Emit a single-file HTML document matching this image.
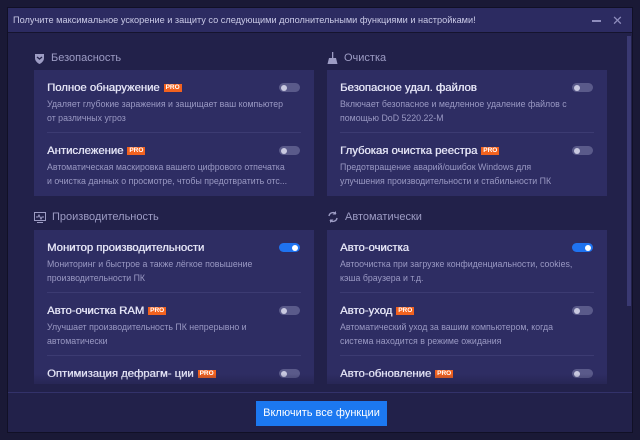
<!DOCTYPE html><html><head><meta charset="utf-8"><style>
*{margin:0;padding:0;box-sizing:border-box}
body{width:640px;height:440px;background:#1a1936;font-family:"Liberation Sans",sans-serif;position:relative;overflow:hidden}
.win{position:absolute;left:7px;top:7px;width:626px;height:426px;background:#22214a;border:1px solid #111026}
.tb{position:absolute;left:0;top:0;width:624px;height:25px;background:#2c2b61;border-bottom:1px solid #15142e;color:#c9c9e6;font-size:9.2px;line-height:25px;padding-left:5px}
.h{position:absolute;color:#9d9cc4;font-size:11px;display:flex;align-items:center;gap:6px}
.card{position:absolute;background:#2e2d63;width:280px;padding:0 13px}
.row{position:relative;border-bottom:1px solid #3c3b72}
.row:last-child{border-bottom:none}
.t{color:#e2e2f4;font-size:11.3px;height:16px;line-height:16px;text-shadow:0.4px 0 0 #e2e2f4}
.d{color:#9a99c3;font-size:8.8px;line-height:14px;margin-top:1px;white-space:nowrap}
.pro{display:inline-block;background:#f2621f;color:#fff;font-size:6.5px;line-height:8px;padding:0 2px;margin-left:4px;vertical-align:2px;font-weight:bold;text-shadow:none}
.tg{position:absolute;right:1px;top:13px;width:21px;height:9px;border-radius:5px;background:#5a5a8a}
.tg:after{content:"";position:absolute;left:2px;top:1.5px;width:6px;height:6px;border-radius:50%;background:#c9c9e0}
.tg.on{background:#1f73f0}.tg.on:after{left:13px;background:#fff}
</style></head><body>
<div class="win">
<div class="tb">Получите максимальное ускорение и защиту со следующими дополнительными функциями и настройками!
<span style="position:absolute;left:584px;top:12px;width:9px;height:1.5px;background:#8e8dbd"></span>
<span style="position:absolute;left:604px;top:0;color:#8e8dbd;font-size:13px">✕</span></div>
<div style="position:absolute;left:619px;top:28px;width:4px;height:270px;background:#3a3972"></div>
<div class="h" style="left:26px;top:44px"><svg width="11" height="11" viewBox="0 0 11 11"><path d="M1 1h9v4c0 3-2.5 5-4.5 6C3.5 10 1 8 1 5z" fill="#9d9cc4"/><path d="M3 4l2.5 2L8 4" stroke="#22214a" stroke-width="1.3" fill="none"/></svg>Безопасность</div>
<div class="h" style="left:319px;top:44px"><svg width="11" height="12" viewBox="0 0 11 12"><rect x="5" y="0" width="1.3" height="6" fill="#9d9cc4"/><path d="M2 6h7l1.5 6h-10z" fill="#9d9cc4"/></svg>Очистка</div>
<div class="h" style="left:26px;top:203px"><svg width="12" height="11" viewBox="0 0 12 11"><rect x="0.5" y="0.5" width="11" height="8" fill="none" stroke="#9d9cc4"/><path d="M2 5h2l1-2 2 4 1-2h2" stroke="#9d9cc4" fill="none"/><rect x="3" y="10" width="6" height="1" fill="#9d9cc4"/></svg>Производительность</div>
<div class="h" style="left:319px;top:203px"><svg width="12" height="12" viewBox="0 0 12 12"><path d="M2 5a4 4 0 0 1 7-2M10 7a4 4 0 0 1-7 2" stroke="#9d9cc4" stroke-width="1.4" fill="none"/><path d="M9 0v3.5H5.5zM3 12V8.5h3.5z" fill="#9d9cc4"/></svg>Автоматически</div>

<div class="card" style="left:26px;top:62px;height:126px">
<div class="row" style="padding-top:10px;height:63px"><div class="t">Полное обнаружение<span class="pro">PRO</span></div><div class="tg"></div><div class="d">Удаляет глубокие заражения и защищает ваш компьютер<br>от различных угроз</div></div>
<div class="row" style="padding-top:10px;height:62px"><div class="t">Антислежение<span class="pro">PRO</span></div><div class="tg"></div><div class="d">Автоматическая маскировка вашего цифрового отпечатка<br>и очистка данных о просмотре, чтобы предотвратить отс...</div></div>
</div>
<div class="card" style="left:319px;top:62px;height:126px">
<div class="row" style="padding-top:10px;height:63px"><div class="t">Безопасное удал. файлов</div><div class="tg"></div><div class="d">Включает безопасное и медленное удаление файлов с<br>помощью DoD 5220.22-M</div></div>
<div class="row" style="padding-top:10px;height:62px"><div class="t">Глубокая очистка реестра<span class="pro">PRO</span></div><div class="tg"></div><div class="d">Предотвращение аварий/ошибок Windows для<br>улучшения производительности и стабильности ПК</div></div>
</div>
<div class="card" style="left:26px;top:222px;height:154px;overflow:hidden">
<div class="row" style="padding-top:10px;height:63px"><div class="t">Монитор производительности</div><div class="tg on"></div><div class="d">Мониторинг и быстрое а также лёгкое повышение<br>производительности ПК</div></div>
<div class="row" style="padding-top:10px;height:63px"><div class="t">Авто-очистка RAM<span class="pro">PRO</span></div><div class="tg"></div><div class="d">Улучшает производительность ПК непрерывно и<br>автоматически</div></div>
<div class="row" style="padding-top:10px;height:63px"><div class="t">Оптимизация дефрагм- ции<span class="pro">PRO</span></div><div class="tg"></div></div>
</div>
<div class="card" style="left:319px;top:222px;height:154px;overflow:hidden">
<div class="row" style="padding-top:10px;height:63px"><div class="t">Авто-очистка</div><div class="tg on"></div><div class="d">Автоочистка при загрузке конфиденциальности, cookies,<br>кэша браузера и т.д.</div></div>
<div class="row" style="padding-top:10px;height:63px"><div class="t">Авто-уход<span class="pro">PRO</span></div><div class="tg"></div><div class="d">Автоматический уход за вашим компьютером, когда<br>система находится в режиме ожидания</div></div>
<div class="row" style="padding-top:10px;height:63px"><div class="t">Авто-обновление<span class="pro">PRO</span></div><div class="tg"></div></div>
</div>
<div style="position:absolute;left:0;top:366px;width:618px;height:18px;background:linear-gradient(rgba(34,33,74,0),#22214a)"></div>
<div style="position:absolute;left:0;top:384px;width:624px;height:1px;background:#33326a"></div>
<div style="position:absolute;left:248px;top:393px;width:131px;height:25px;background:#1c78f0;color:#fff;font-size:11px;line-height:25px;text-align:center">Включить все функции</div>
</div>
</body></html>
